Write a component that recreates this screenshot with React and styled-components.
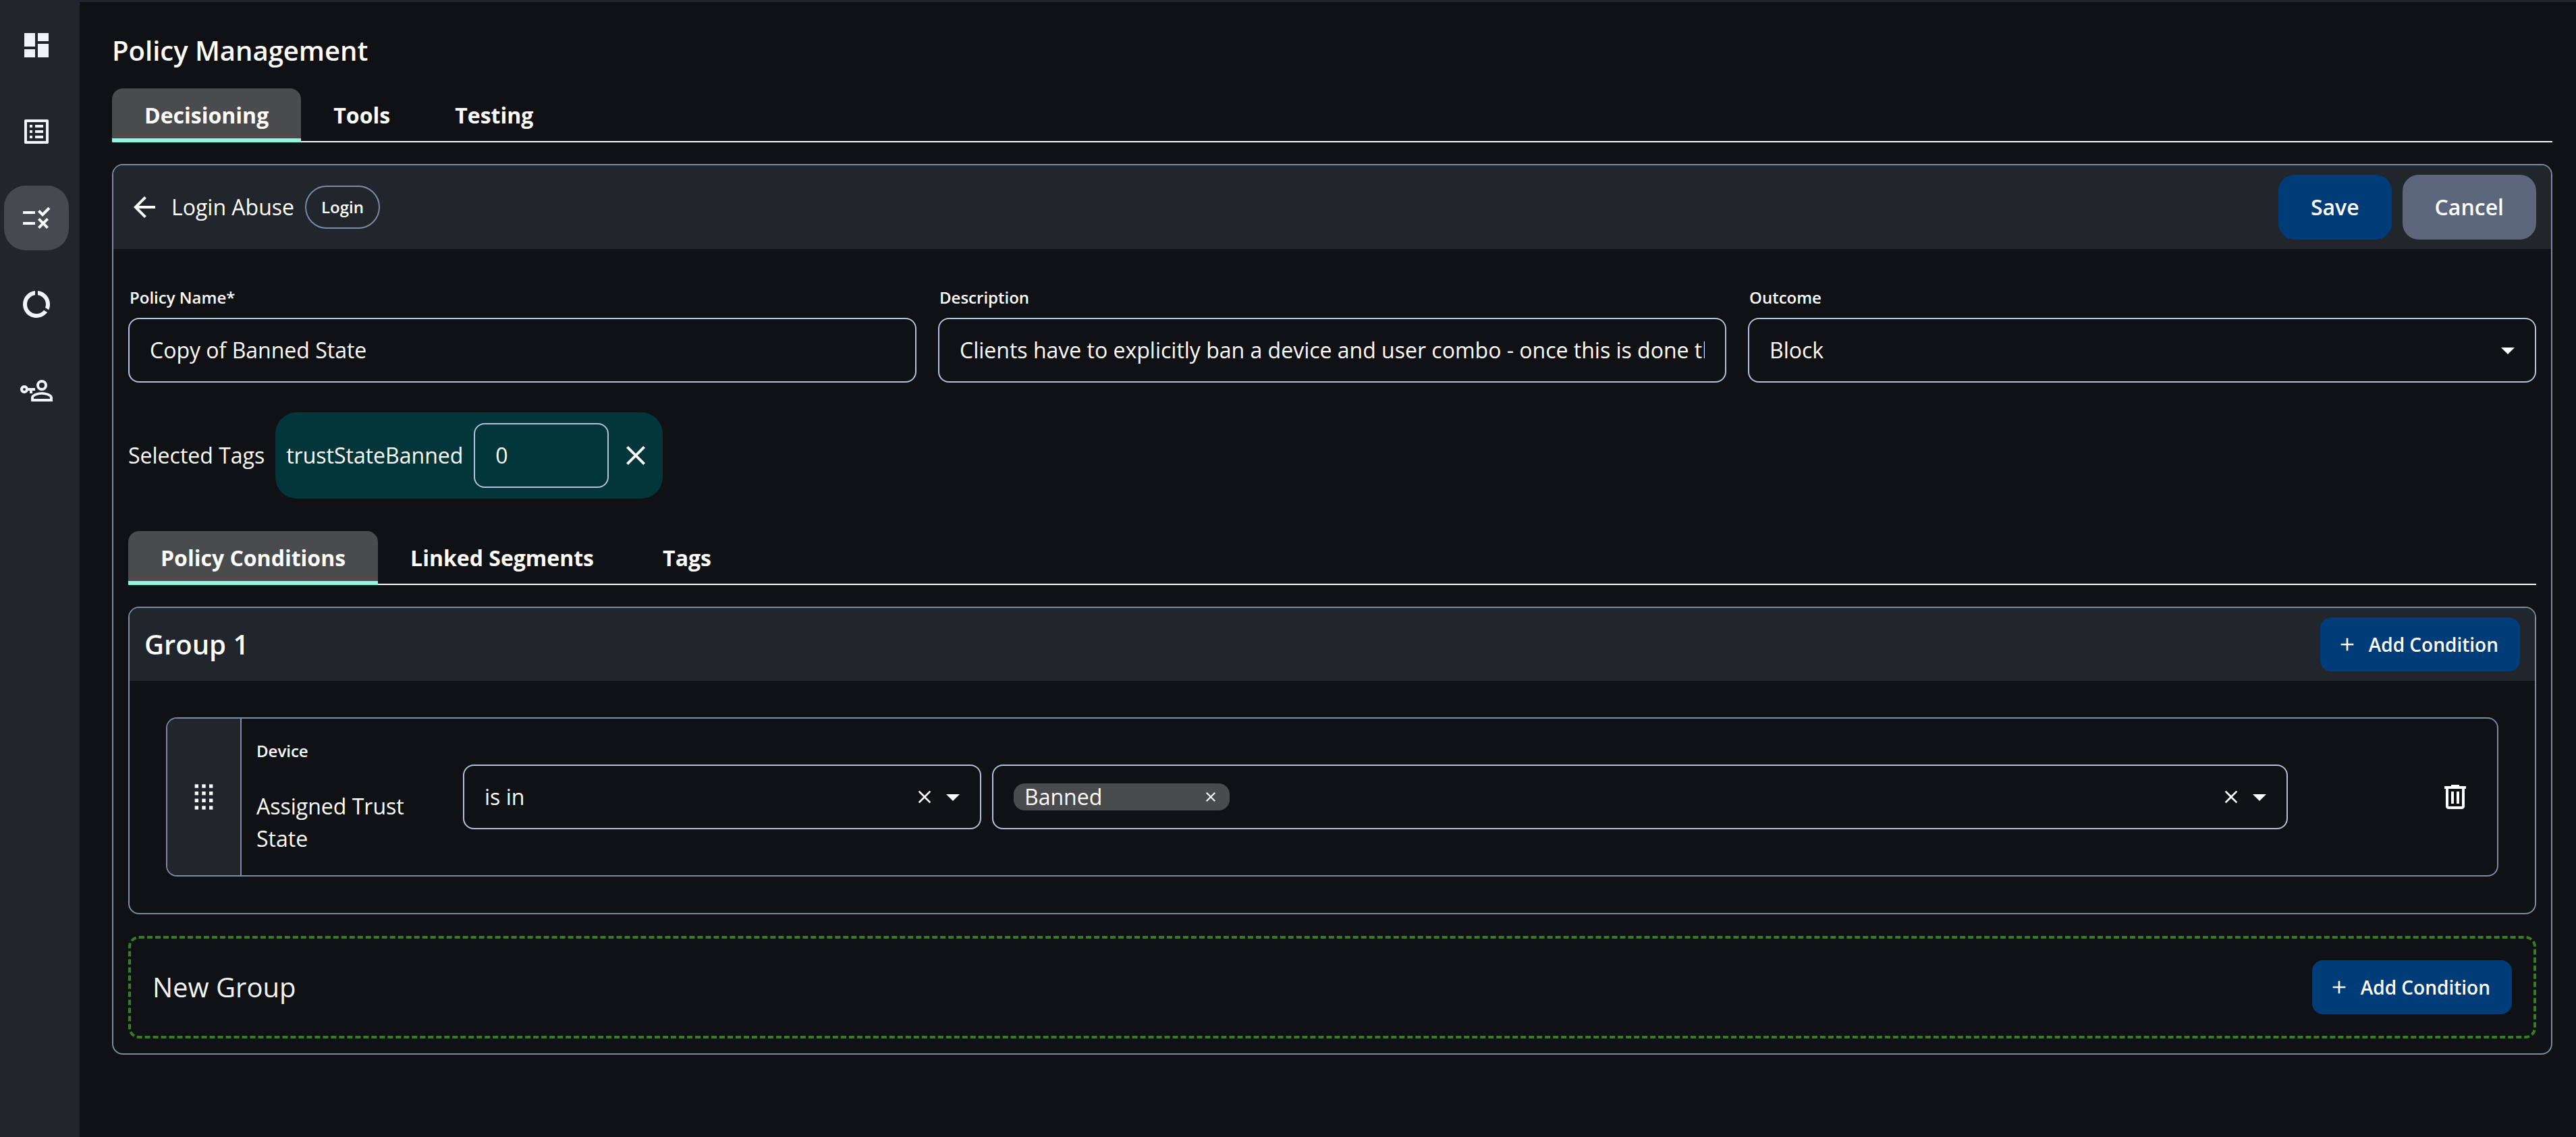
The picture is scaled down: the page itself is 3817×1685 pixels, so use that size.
import React, {useState} from "react";
import styled, {createGlobalStyle} from "styled-components";
import {
    MdAdd,
    MdArrowBack,
    MdArrowDropDown,
    MdClose,
    MdDashboard,
    MdDataUsage,
    MdListAlt,
    MdRule,
} from "react-icons/md";

const navItems = [
    {label: "Dashboard", icon: <MdDashboard/>},
    {label: "Events", icon: <MdListAlt/>},
    {label: "Policies", icon: <MdRule/>, active: true},
    {label: "Usage", icon: <MdDataUsage/>},
    {label: "Access", icon: <KeyPersonIcon/>},
];

function KeyPersonIcon() {
    return (
        <svg viewBox="0 0 24 24" width="48" height="48" fill="currentColor" overflow="visible">
            <path
                fillRule="evenodd"
                d="M3 8a3 3 0 0 1 2.8 2H11v2H9v2H7v-2H5.8A3 3 0 1 1 3 8zm0 2a1 1 0 1 0 0 2 1 1 0 0 0 0-2z"
            />
            <path
                fillRule="evenodd"
                d="M16 4a4 4 0 1 1 0 8 4 4 0 0 1 0-8zm0 2a2 2 0 1 0 0 4 2 2 0 0 0 0-4z"
            />
            <path
                fillRule="evenodd"
                d="M16 13c-2.67 0-8 1.34-8 4v3h16v-3c0-2.66-5.33-4-8-4zm6 5H10v-1c0-.64 3.03-2.1 6-2.1s6 1.46 6 2.1z"
            />
        </svg>
    );
}

function TrashIcon() {
    return (
        <svg viewBox="0 0 24 24" width="48" height="48" fill="currentColor">
            <path
                fillRule="evenodd"
                d="M7 21q-.825 0-1.412-.587T5 19V6H4V4h5V3h6v1h5v2h-1v13q0 .825-.587 1.413T17 21zM17 6H7v13h10zM9 17h2V8H9zm4 0h2V8h-2z"
            />
        </svg>
    );
}

function DragDotsIcon() {
    const columns = [8, 12, 16];
    const rows = [6, 10, 14, 18];
    return (
        <svg viewBox="0 0 24 24" width="64" height="64" fill="currentColor">
            {rows.map((y) =>
                columns.map((x) => <rect key={`${x}-${y}`} x={x - 1} y={y - 1} width="2" height="2"/>)
            )}
        </svg>
    );
}

function TabBar({label, tabs}) {
    const [active, setActive] = useState(tabs[0]);
    return (
        <TabList role="tablist" aria-label={label}>
            {tabs.map((tab) => (
                <Tab
                    key={tab}
                    type="button"
                    role="tab"
                    aria-selected={tab === active}
                    $active={tab === active}
                    onClick={() => setActive(tab)}
                >
                    {tab}
                </Tab>
            ))}
        </TabList>
    );
}

function AddConditionButton() {
    return (
        <AddButton type="button">
            <MdAdd size={32}/>
            Add Condition
        </AddButton>
    );
}

function Condition() {
    return (
        <ConditionCard>
            <DragHandle type="button" aria-label="Reorder condition">
                <DragDotsIcon/>
            </DragHandle>
            <ConditionBody>
                <ConditionName>
                    <SmallText>Device</SmallText>
                    <ConditionText>Assigned Trust State</ConditionText>
                </ConditionName>
                <Control>
                    <Select aria-label="Operator" defaultValue="is in">
                        <option>is in</option>
                        <option>is not in</option>
                    </Select>
                    <IconButton type="button" aria-label="Clear operator">
                        <MdClose size={32}/>
                    </IconButton>
                    <MdArrowDropDown size={48}/>
                </Control>
                <Control>
                    <Chip>
                        Banned
                        <IconButton type="button" aria-label="Remove Banned">
                            <MdClose size={24}/>
                        </IconButton>
                    </Chip>
                    <TextInput aria-label="Trust states"/>
                    <IconButton type="button" aria-label="Clear trust states">
                        <MdClose size={32}/>
                    </IconButton>
                    <MdArrowDropDown size={48}/>
                </Control>
                <DeleteButton type="button" aria-label="Delete condition">
                    <TrashIcon/>
                </DeleteButton>
            </ConditionBody>
        </ConditionCard>
    );
}

function App() {
    return (
        <>
            <GlobalStyle/>
            <Page>
                <Sidebar aria-label="Main">
                    {navItems.map(({label, icon, active}) => (
                        <NavLink
                            key={label}
                            href="#"
                            aria-label={label}
                            aria-current={active ? "page" : undefined}
                            $active={active}
                        >
                            {icon}
                        </NavLink>
                    ))}
                </Sidebar>
                <Main>
                    <Title>Policy Management</Title>
                    <TabBar label="Policy Management" tabs={["Decisioning", "Tools", "Testing"]}/>
                    <Card>
                        <CardHeader>
                            <HeaderGroup>
                                <IconButton type="button" aria-label="Back">
                                    <MdArrowBack size={48}/>
                                </IconButton>
                                <span>Login Abuse</span>
                                <Badge>Login</Badge>
                            </HeaderGroup>
                            <HeaderGroup>
                                <Button type="submit">Save</Button>
                                <Button type="button" $muted>Cancel</Button>
                            </HeaderGroup>
                        </CardHeader>
                        <CardBody>
                            <Fields>
                                <Field>
                                    <Label htmlFor="policy-name">Policy Name*</Label>
                                    <Control>
                                        <TextInput id="policy-name" defaultValue="Copy of Banned State"/>
                                    </Control>
                                </Field>
                                <Field>
                                    <Label htmlFor="description">Description</Label>
                                    <Control>
                                        <TextInput
                                            id="description"
                                            defaultValue="Clients have to explicitly ban a device and user combo - once this is done the user is blocked"
                                        />
                                    </Control>
                                </Field>
                                <Field>
                                    <Label htmlFor="outcome">Outcome</Label>
                                    <Control>
                                        <Select id="outcome" defaultValue="Block">
                                            <option>Block</option>
                                            <option>Allow</option>
                                        </Select>
                                        <MdArrowDropDown size={48}/>
                                    </Control>
                                </Field>
                            </Fields>
                            <TagRow>
                                <span>Selected Tags</span>
                                <TagPill>
                                    <label htmlFor="tag-value">trustStateBanned</label>
                                    <TagControl>
                                        <TextInput id="tag-value" defaultValue="0"/>
                                    </TagControl>
                                    <IconButton type="button" aria-label="Remove trustStateBanned">
                                        <MdClose size={48}/>
                                    </IconButton>
                                </TagPill>
                            </TagRow>
                            <TabBar label="Policy" tabs={["Policy Conditions", "Linked Segments", "Tags"]}/>
                            <Card>
                                <CardHeader>
                                    <GroupTitle>Group 1</GroupTitle>
                                    <AddConditionButton/>
                                </CardHeader>
                                <GroupBody>
                                    <Condition/>
                                </GroupBody>
                            </Card>
                            <NewGroup>
                                <NewGroupTitle>New Group</NewGroupTitle>
                                <AddConditionButton/>
                            </NewGroup>
                        </CardBody>
                    </Card>
                </Main>
            </Page>
        </>
    );
}

const GlobalStyle = createGlobalStyle`
  :root {
    --background: #101114;
    --surface: #21252c;
    --raised: #4a4b4d;
    --outline: #7d8ba6;
    --input-outline: #b4c0dc;
    --primary: #003c77;
    --accent: #8cf8e0;
  }

  *, *::before, *::after {
    box-sizing: border-box;
  }

  body {
    margin: 0;
    background: var(--background);
    color: #fff;
    font-family: "Open Sans", "Noto Sans", sans-serif;
    font-size: 32px;
    line-height: 48px;
  }

  button, input, select {
    font: inherit;
    color: inherit;
  }

  svg {
    display: block;
    flex-shrink: 0;
  }
`;

const Page = styled.div`
  display: flex;
  min-height: 100vh;
  border-top: 3px solid var(--surface);
`;

const Sidebar = styled.nav`
  display: flex;
  flex-direction: column;
  gap: 32px;
  flex-shrink: 0;
  width: 118px;
  padding: 16px 6px;
  background: var(--surface);
`;

const NavLink = styled.a`
  display: flex;
  align-items: center;
  justify-content: center;
  width: 96px;
  height: 96px;
  border-radius: 32px;
  color: ${({$active}) => ($active ? "#fff" : "#f1f5f9")};
  background: ${({$active}) => ($active ? "#464950" : "transparent")};
  font-size: 48px;
`;

const Main = styled.main`
  flex: 1;
  min-width: 0;
  padding: 42px 35px 42px 48px;
`;

const Title = styled.h1`
  margin: 0 0 26px;
  font-size: 40px;
  font-weight: 600;
  line-height: 60px;
`;

const TabList = styled.div`
  display: flex;
  margin-bottom: 32px;
  box-shadow: inset 0 -2px #fff;
`;

const Tab = styled.button`
  min-width: 180px;
  height: 80px;
  padding: 6px 48px 0;
  border: 0;
  border-bottom: 6px solid ${({$active}) => ($active ? "var(--accent)" : "transparent")};
  border-radius: 16px 16px 0 0;
  background: ${({$active}) => ($active ? "var(--raised)" : "transparent")};
  font-weight: 700;
  cursor: pointer;
`;

const Card = styled.section`
  overflow: hidden;
  border: 2px solid var(--outline);
  border-radius: 16px;
`;

const CardHeader = styled.header`
  display: flex;
  align-items: center;
  justify-content: space-between;
  padding: 14px 22px;
  background: var(--surface);
`;

const CardBody = styled.div`
  padding: 54px 22px 22px;
`;

const HeaderGroup = styled.div`
  display: flex;
  align-items: center;
  gap: 16px;
`;

const IconButton = styled.button`
  display: flex;
  flex-shrink: 0;
  padding: 0;
  border: 0;
  background: none;
  cursor: pointer;
`;

const Badge = styled.span`
  padding: 12px 22px;
  border: 2px solid var(--outline);
  border-radius: 32px;
  font-size: 24px;
  font-weight: 600;
  line-height: 36px;
`;

const Button = styled.button`
  padding: 24px 48px;
  border: 0;
  border-radius: 24px;
  background: ${({$muted}) => ($muted ? "#5d677b" : "var(--primary)")};
  font-weight: 600;
  cursor: pointer;
`;

const AddButton = styled.button`
  display: flex;
  align-items: center;
  gap: 16px;
  height: 80px;
  padding: 0 32px 0 24px;
  border: 0;
  border-radius: 16px;
  background: var(--primary);
  font-size: 28px;
  font-weight: 600;
  cursor: pointer;
`;

const Fields = styled.div`
  display: grid;
  grid-template-columns: repeat(3, minmax(0, 1fr));
  gap: 32px;
`;

const Field = styled.div`
  display: flex;
  flex-direction: column;
  gap: 12px;
`;

const Label = styled.label`
  padding-left: 2px;
  font-size: 24px;
  font-weight: 600;
  line-height: 36px;
`;

const Control = styled.div`
  display: flex;
  align-items: center;
  gap: 2px;
  height: 96px;
  padding: 0 16px 0 30px;
  border: 2px solid var(--input-outline);
  border-radius: 16px;
`;

const TextInput = styled.input`
  flex: 1;
  min-width: 0;
  margin-right: 14px;
  padding: 0;
  border: 0;
  outline: 0;
  background: none;
`;

const Select = styled.select`
  flex: 1;
  min-width: 0;
  padding: 0;
  border: 0;
  outline: 0;
  appearance: none;
  background: none;
`;

const TagRow = styled.div`
  display: flex;
  align-items: center;
  gap: 16px;
  margin: 44px 0 48px;
`;

const TagPill = styled.div`
  display: flex;
  align-items: center;
  gap: 16px;
  padding: 16px;
  border-radius: 32px;
  background: #03363a;
`;

const TagControl = styled(Control)`
  width: 200px;
`;

const GroupTitle = styled.h2`
  margin: 0;
  font-size: 40px;
  font-weight: 600;
`;

const GroupBody = styled.div`
  padding: 54px;
`;

const ConditionCard = styled.div`
  display: flex;
  overflow: hidden;
  border: 2px solid var(--outline);
  border-radius: 16px;
`;

const DragHandle = styled.button`
  display: flex;
  align-items: center;
  justify-content: center;
  flex-shrink: 0;
  width: 110px;
  padding: 0;
  border: 0;
  border-right: 2px solid var(--outline);
  background: var(--surface);
  cursor: grab;
`;

const ConditionBody = styled.div`
  display: grid;
  grid-template-columns: 290px minmax(0, 2fr) minmax(0, 5fr) 272px;
  gap: 16px;
  align-items: center;
  flex: 1;
  min-width: 0;
  padding: 30px 22px;
`;

const ConditionName = styled.div`
  display: flex;
  flex-direction: column;
  gap: 40px;
`;

const SmallText = styled.span`
  font-size: 24px;
  font-weight: 600;
  line-height: 36px;
`;

const ConditionText = styled.span`
  max-width: 240px;
`;

const Chip = styled.span`
  display: flex;
  align-items: center;
  justify-content: space-between;
  width: 320px;
  height: 40px;
  padding: 0 16px;
  border-radius: 16px;
  background: var(--raised);
`;

const DeleteButton = styled(IconButton)`
  justify-self: end;
  padding: 16px;
`;

const NewGroup = styled.section`
  display: flex;
  align-items: center;
  justify-content: space-between;
  margin-top: 32px;
  padding: 32px;
  border: 4px dashed #357f22;
  border-radius: 16px;
`;

const NewGroupTitle = styled.h2`
  margin: 0;
  color: #f1f5f9;
  font-size: 40px;
  font-weight: 400;
`;

export default App;
